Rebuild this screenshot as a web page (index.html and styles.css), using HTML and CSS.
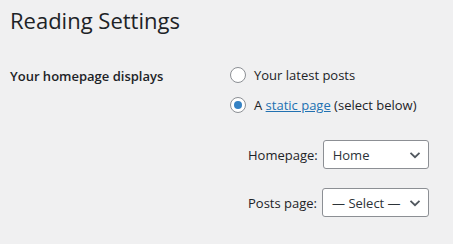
FILE: index.html
```html
<!DOCTYPE html>
<html lang="en">

<head>
    <meta charset="UTF-8">
    <meta name="viewport" content="width=device-width, initial-scale=1.0">
    <title>Reading Settings</title>

    <link rel="stylesheet" href="styles.css">
</head>

<body>
    <div class="wrap">
        <h1 class="page-title">Reading Settings</h1>

        <div class="form-row">
            <div class="row-label">Your homepage displays</div>
            <div class="row-field">
                <label class="radio-line">
                    <span class="radio"></span>
                    <span>Your latest posts</span>
                </label>
                <label class="radio-line">
                    <span class="radio checked"></span>
                    <span>A <a href="#">static page</a> (select below)</span>
                </label>

                <div class="page-selects">
                    <div class="select-line">
                        <span>Homepage:</span>
                        <div class="select home">
                            <span>Home</span>
                            <svg viewBox="0 0 12 8" width="12" height="8"><path d="M1.5 1.8 6 6.2 10.5 1.8" /></svg>
                        </div>
                    </div>
                    <div class="select-line">
                        <span>Posts page:</span>
                        <div class="select">
                            <span>— Select —</span>
                            <svg viewBox="0 0 12 8" width="12" height="8"><path d="M1.5 1.8 6 6.2 10.5 1.8" /></svg>
                        </div>
                    </div>
                </div>
            </div>
        </div>
    </div>
</body>

</html>
```

FILE: styles.css
```css
body {
    margin: 0;
    background-color: #f0f0f1;
    color: #1d2327;
    font-family: "Open Sans", "Noto Sans", sans-serif;
    font-size: 13px;
}

.wrap {
    padding: 0 0 0 10px;
}

.page-title {
    margin: 0;
    padding: 5px 0 0;
    font-size: 22px;
    font-weight: 400;
    line-height: 30px;
}

.form-row {
    display: flex;
    margin-top: 30px;
}

.row-label {
    width: 220px;
    padding-top: 2px;
    font-weight: 600;
    font-size: 13px;
}

.row-field {
    display: flex;
    flex-direction: column;
}

.radio-line {
    display: flex;
    align-items: center;
    gap: 8px;
    height: 20px;
    margin-bottom: 10px;
}

.radio-line a {
    color: #2271b1;
}

.radio {
    width: 14px;
    height: 14px;
    border: 1px solid #8c8f94;
    border-radius: 50%;
    background-color: #fff;
    display: grid;
    place-items: center;
}

.radio.checked::before {
    content: "";
    width: 8px;
    height: 8px;
    border-radius: 50%;
    background-color: #3582c4;
}

.page-selects {
    display: flex;
    flex-direction: column;
    gap: 19px;
    padding: 15px 0 0 18px;
}

.select-line {
    display: flex;
    align-items: center;
    gap: 5px;
}

.select {
    display: flex;
    align-items: center;
    justify-content: space-between;
    box-sizing: border-box;
    width: 107px;
    height: 29px;
    padding: 0 7px 0 9px;
    border: 1px solid #8c8f94;
    border-radius: 3px;
    background-color: #fff;
    color: #2c3338;
}

.select.home {
    width: 106px;
    padding-left: 9px;
}

.select svg path {
    fill: none;
    stroke: #50575e;
    stroke-width: 1.8;
}
```
